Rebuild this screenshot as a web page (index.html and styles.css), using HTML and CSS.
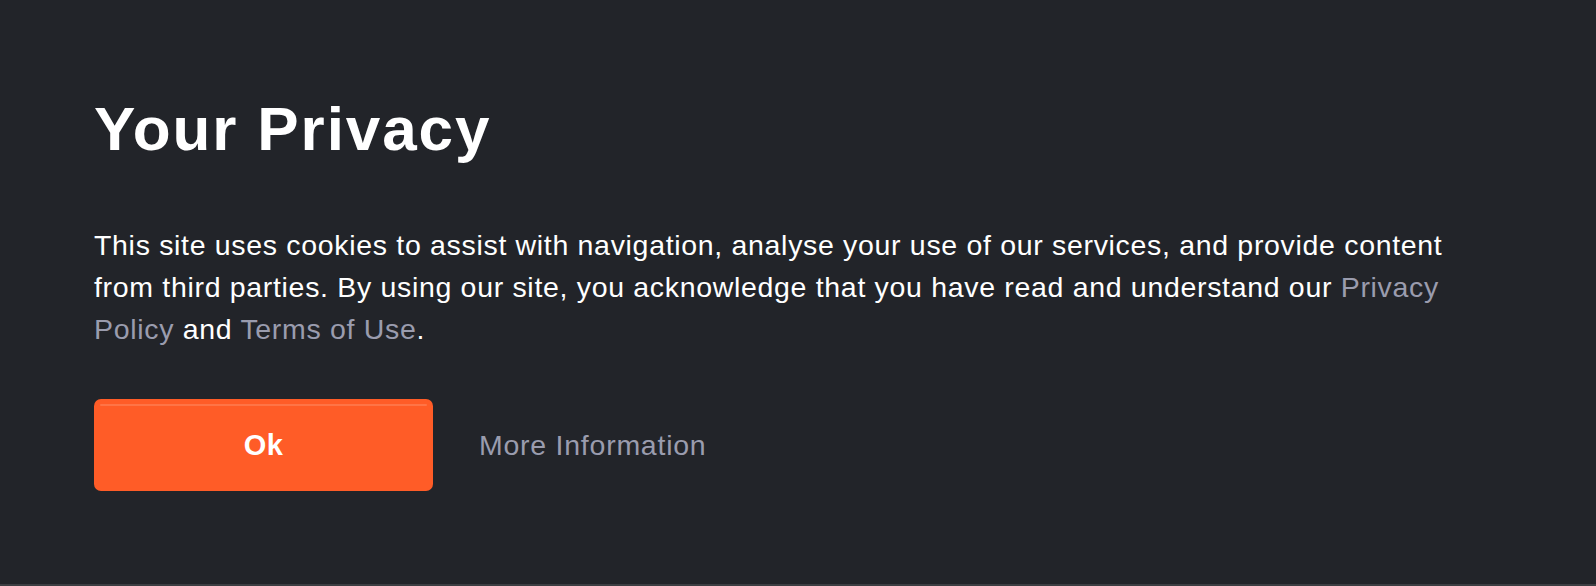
FILE: index.html
```html
<!DOCTYPE html>
<html lang="en">
<head>
<meta charset="utf-8">
<title>Your Privacy</title>
<link rel="stylesheet" href="styles.css">
</head>
<body>
<div class="page">
  <section class="privacy">
    <h1 class="title">Your Privacy</h1>
    <p class="text">This site uses cookies to assist with navigation, analyse your use of our services, and provide content from third parties. By using our site, you acknowledge that you have read and understand our <a class="link" href="#">Privacy Policy</a> and <a class="link" href="#">Terms of Use</a>.</p>
    <div class="actions">
      <button class="ok" type="button">Ok</button>
      <a class="more" href="#">More Information</a>
    </div>
  </section>
  <div class="next"></div>
</div>
</body>
</html>
```

FILE: styles.css
```css
html, body {
  margin: 0;
  padding: 0;
  background: #222429;
}
body {
  font-family: "Liberation Sans", Arial, Helvetica, sans-serif;
  color: #ffffff;
  height: 586px;
  overflow: hidden;
}
.page {
  height: 586px;
  display: flex;
  flex-direction: column;
}
.privacy {
  flex: 1;
  padding: 98px 94px 0 94px;
  display: flex;
  flex-direction: column;
}
.title {
  margin: 0;
  font-size: 62px;
  line-height: 62px;
  font-weight: 700;
  letter-spacing: 1.9px;
}
.text {
  margin: 64px 0 0 0;
  font-size: 28.5px;
  line-height: 42px;
  letter-spacing: 0.68px;
  max-width: 1380px;
}
.link {
  color: #9a9cae;
  text-decoration: none;
}
.actions {
  margin-top: 49px;
  display: flex;
  align-items: center;
  gap: 46px;
}
.ok {
  position: relative;
  width: 339px;
  height: 92px;
  border: 0;
  border-radius: 7px;
  background: #ff5c27;
  color: #ffffff;
  font-family: "Liberation Sans", Arial, Helvetica, sans-serif;
  font-size: 29px;
  font-weight: 700;
  letter-spacing: 0.5px;
  padding: 0;
}
.ok::before {
  content: "";
  position: absolute;
  top: 5px;
  left: 6px;
  right: 6px;
  height: 2px;
  border-radius: 2px;
  background: #ff7446;
}
.more {
  color: #9a9cae;
  text-decoration: none;
  font-size: 28.5px;
  line-height: 30px;
  letter-spacing: 0.75px;
}
.next {
  height: 2px;
  background: #3c3e42;
}
```
